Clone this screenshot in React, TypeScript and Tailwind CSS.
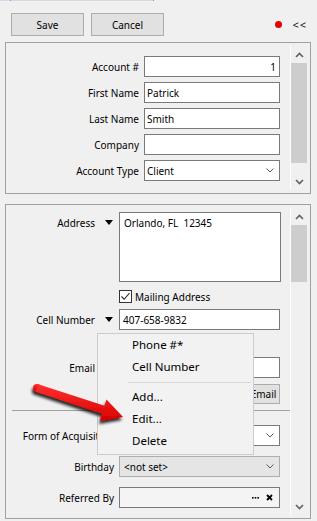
import React from "react";

const Chev = ({ up = false, color = "#606060" }: { up?: boolean; color?: string }) => (
  <svg width="9" height="6" viewBox="0 0 9 6">
    <polyline
      points={up ? "1,5 4.5,1.5 8,5" : "1,1 4.5,4.5 8,1"}
      fill="none"
      stroke={color}
      strokeWidth="1.6"
    />
  </svg>
);

const SmallChev = () => (
  <svg width="8" height="5" viewBox="0 0 8 5">
    <polyline points="0.5,0.5 4,4 7.5,0.5" fill="none" stroke="#5a5a5a" strokeWidth="1" />
  </svg>
);

const DownTri = () => (
  <svg width="8" height="5" viewBox="0 0 8 5">
    <polygon points="0,0 8,0 4,5" fill="#000" />
  </svg>
);

function ScrollBar({ thumbH }: { thumbH: number }) {
  return (
    <div className="flex flex-col w-[17px] border-l border-white my-[3px] mr-[3px]">
      <div className="h-[17px] flex items-center justify-center pl-[1px]">
        <Chev up />
      </div>
      <div className="flex-1 flex flex-col">
        <div className="w-[16px] bg-[#cdcdcd]" style={{ height: thumbH }} />
      </div>
      <div className="h-[17px] flex items-center justify-center pl-[1px]">
        <Chev />
      </div>
    </div>
  );
}

function Row1({ label, children }: { label: string; children: React.ReactNode }) {
  return (
    <div className="flex items-center h-[21px]">
      <div className="w-[138px] text-right pr-[5px] whitespace-nowrap">{label}</div>
      {children}
    </div>
  );
}

const Field1 = ({ children, right = false }: { children?: React.ReactNode; right?: boolean }) => (
  <div
    className={`w-[136px] h-[21px] bg-white border border-[#7a7a7a] flex items-center ${
      right ? "justify-end pr-[3px]" : "pl-[2px]"
    }`}
  >
    {children}
  </div>
);

function Label2({ text, arrow = false }: { text: string; arrow?: boolean }) {
  return (
    <div className="w-[113px] flex items-center justify-end whitespace-nowrap">
      <span className={arrow ? "" : "pr-[5px]"}>{text}</span>
      {arrow && (
        <span className="ml-[10px] mr-[6px] flex items-center">
          <DownTri />
        </span>
      )}
    </div>
  );
}

export default function App() {
  return (
    <div className="relative w-[317px] h-[521px] overflow-hidden bg-[#f0f0f0] text-black text-[10px] font-['Noto_Sans','DejaVu_Sans',sans-serif] leading-none">
      {/* top strip */}
      <div className="flex h-px">
        <div className="w-[10px] bg-[#d3dae3]" />
        <div className="w-px bg-[#8c9bb0]" />
        <div className="w-[142px] bg-[#d3dae3]" />
        <div className="w-px bg-[#8c9bb0]" />
      </div>

      {/* button row */}
      <div className="flex items-center mt-[12px] pl-[11px] pr-[10px] h-[23px]">
        <div className="w-[73px] h-[23px] bg-[#e1e1e1] border border-[#adadad] flex items-center justify-center">
          Save
        </div>
        <div className="ml-[7px] w-[73px] h-[23px] bg-[#e1e1e1] border border-[#adadad] flex items-center justify-center">
          Cancel
        </div>
        <div className="ml-auto w-[7px] h-[7px] rounded-full bg-[#e60000]" />
        <div className="ml-[10px] text-[11px] tracking-[1px] text-[#111]">&lt;&lt;</div>
      </div>

      {/* panel 1 */}
      <div className="mt-[6px] mx-[5px] w-[306px] h-[152px] border border-[#a0a0a0] flex">
        <div className="flex-1 flex flex-col gap-[5px] pt-[13px]">
          <Row1 label="Account #">
            <Field1 right>1</Field1>
          </Row1>
          <Row1 label="First Name">
            <Field1>Patrick</Field1>
          </Row1>
          <Row1 label="Last Name">
            <Field1>Smith</Field1>
          </Row1>
          <Row1 label="Company">
            <Field1 />
          </Row1>
          <Row1 label="Account Type">
            <div className="w-[136px] h-[21px] bg-white border border-[#7a7a7a] flex items-center pl-[2px] pr-[5px]">
              <span className="flex-1">Client</span>
              <SmallChev />
            </div>
          </Row1>
        </div>
        <ScrollBar thumbH={100} />
      </div>

      {/* panel 2 */}
      <div className="mt-[10px] mx-[5px] w-[306px] h-[315px] border border-[#a0a0a0] flex">
        <div className="flex-1 flex flex-col pt-[7px]">
          {/* address */}
          <div className="flex items-start h-[70px]">
            <div className="h-[21px] flex items-center">
              <Label2 text="Address" arrow />
            </div>
            <div className="w-[162px] h-[70px] bg-white border border-[#7a7a7a] pl-[4px] pt-[5px] whitespace-pre">
              {"Orlando, FL  12345"}
            </div>
          </div>
          {/* mailing address checkbox */}
          <div className="flex items-center mt-[8px] h-[13px]">
            <div className="w-[113px]" />
            <div className="w-[13px] h-[13px] bg-white border border-[#333] flex items-center justify-center">
              <svg width="11" height="11" viewBox="0 0 11 11">
                <polyline points="1.5,5.5 4.2,8.3 9.5,2" fill="none" stroke="#222" strokeWidth="1.1" />
              </svg>
            </div>
            <span className="ml-[3px]">Mailing Address</span>
          </div>
          {/* cell number */}
          <div className="flex items-center mt-[6px] h-[21px]">
            <Label2 text="Cell Number" arrow />
            <div className="w-[161px] h-[21px] bg-white border border-[#7a7a7a] flex items-center pl-[3px]">
              407-658-9832
            </div>
          </div>
          {/* email */}
          <div className="flex items-center mt-[27px] h-[21px]">
            <Label2 text="Email" arrow />
            <div className="w-[161px] h-[21px] bg-white border border-[#7a7a7a]" />
          </div>
          <div className="flex items-center mt-[6px] h-[20px]">
            <div className="w-[113px]" />
            <div className="w-[161px] flex justify-end">
              <div className="w-[33px] h-[20px] bg-[#e1e1e1] border border-[#adadad] flex items-center justify-center">
                Email
              </div>
            </div>
          </div>
          {/* separator */}
          <div className="mt-[6px] ml-[6px] h-px bg-[#a0a0a0]" />
          {/* form of acquisition */}
          <div className="flex items-center mt-[14px] h-[21px]">
            <Label2 text="Form of Acquisition" />
            <div className="w-[161px] h-[21px] bg-white border border-[#7a7a7a] flex items-center justify-end pr-[5px]">
              <SmallChev />
            </div>
          </div>
          {/* birthday */}
          <div className="flex items-center mt-[10px] h-[21px]">
            <Label2 text="Birthday" />
            <div className="w-[161px] h-[21px] bg-[#e5e5e5] border border-[#adadad] flex items-center pl-[4px] pr-[5px]">
              <span className="flex-1">&lt;not set&gt;</span>
              <SmallChev />
            </div>
          </div>
          {/* referred by */}
          <div className="flex items-center mt-[10px] h-[21px]">
            <Label2 text="Referred By" />
            <div className="w-[161px] h-[21px] bg-[#f4f4f4] border border-[#7a7a7a] flex items-center justify-end pr-[6px] gap-[7px]">
              <svg width="7" height="3" viewBox="0 0 7 3">
                <rect x="0" y="1" width="1.6" height="1.6" fill="#000" />
                <rect x="2.7" y="1" width="1.6" height="1.6" fill="#000" />
                <rect x="5.4" y="1" width="1.6" height="1.6" fill="#000" />
              </svg>
              <svg width="7" height="7" viewBox="0 0 7 7">
                <path d="M1,1 L6,6 M6,1 L1,6" stroke="#000" strokeWidth="1.8" />
              </svg>
            </div>
          </div>
        </div>
        <ScrollBar thumbH={57} />
      </div>

      {/* context menu */}
      <div className="absolute left-[97px] top-[333px] w-[157px] h-[122px] bg-[#f2f2f2] border border-[#cccccc] flex flex-col text-[11.5px]">
        <div className="h-[22px] flex items-center pl-[34px]">Phone #*</div>
        <div className="h-[22px] flex items-center pl-[34px]">Cell Number</div>
        <div className="h-[8px] flex items-center pl-[30px] pr-[2px]">
          <div className="h-px w-full bg-[#d7d7d7]" />
        </div>
        <div className="h-[22px] flex items-center pl-[34px]">Add...</div>
        <div className="h-[22px] flex items-center pl-[34px]">Edit...</div>
        <div className="h-[22px] flex items-center pl-[34px]">Delete</div>
      </div>

      {/* red arrow */}
      <svg
        className="absolute left-0 top-0 pointer-events-none"
        width="317"
        height="521"
        viewBox="0 0 317 521"
      >
        <defs>
          <filter id="sh" x="-20%" y="-20%" width="140%" height="160%">
            <feGaussianBlur in="SourceAlpha" stdDeviation="1.6" />
            <feOffset dx="-1" dy="3" result="b" />
            <feComponentTransfer>
              <feFuncA type="linear" slope="0.85" />
            </feComponentTransfer>
            <feMerge>
              <feMergeNode />
              <feMergeNode in="SourceGraphic" />
            </feMerge>
          </filter>
          <linearGradient id="rg" x1="0" y1="0" x2="0" y2="1">
            <stop offset="0" stopColor="#ff3030" />
            <stop offset="1" stopColor="#d80000" />
          </linearGradient>
        </defs>
        <g filter="url(#sh)">
          <circle cx="37" cy="388" r="4" fill="url(#rg)" />
          <polygon
            points="38.3,384.2 104.5,405.8 106.5,399.5 123,417 100,421 102,413.7 35.7,391.8"
            fill="url(#rg)"
          />
        </g>
      </svg>
    </div>
  );
}
